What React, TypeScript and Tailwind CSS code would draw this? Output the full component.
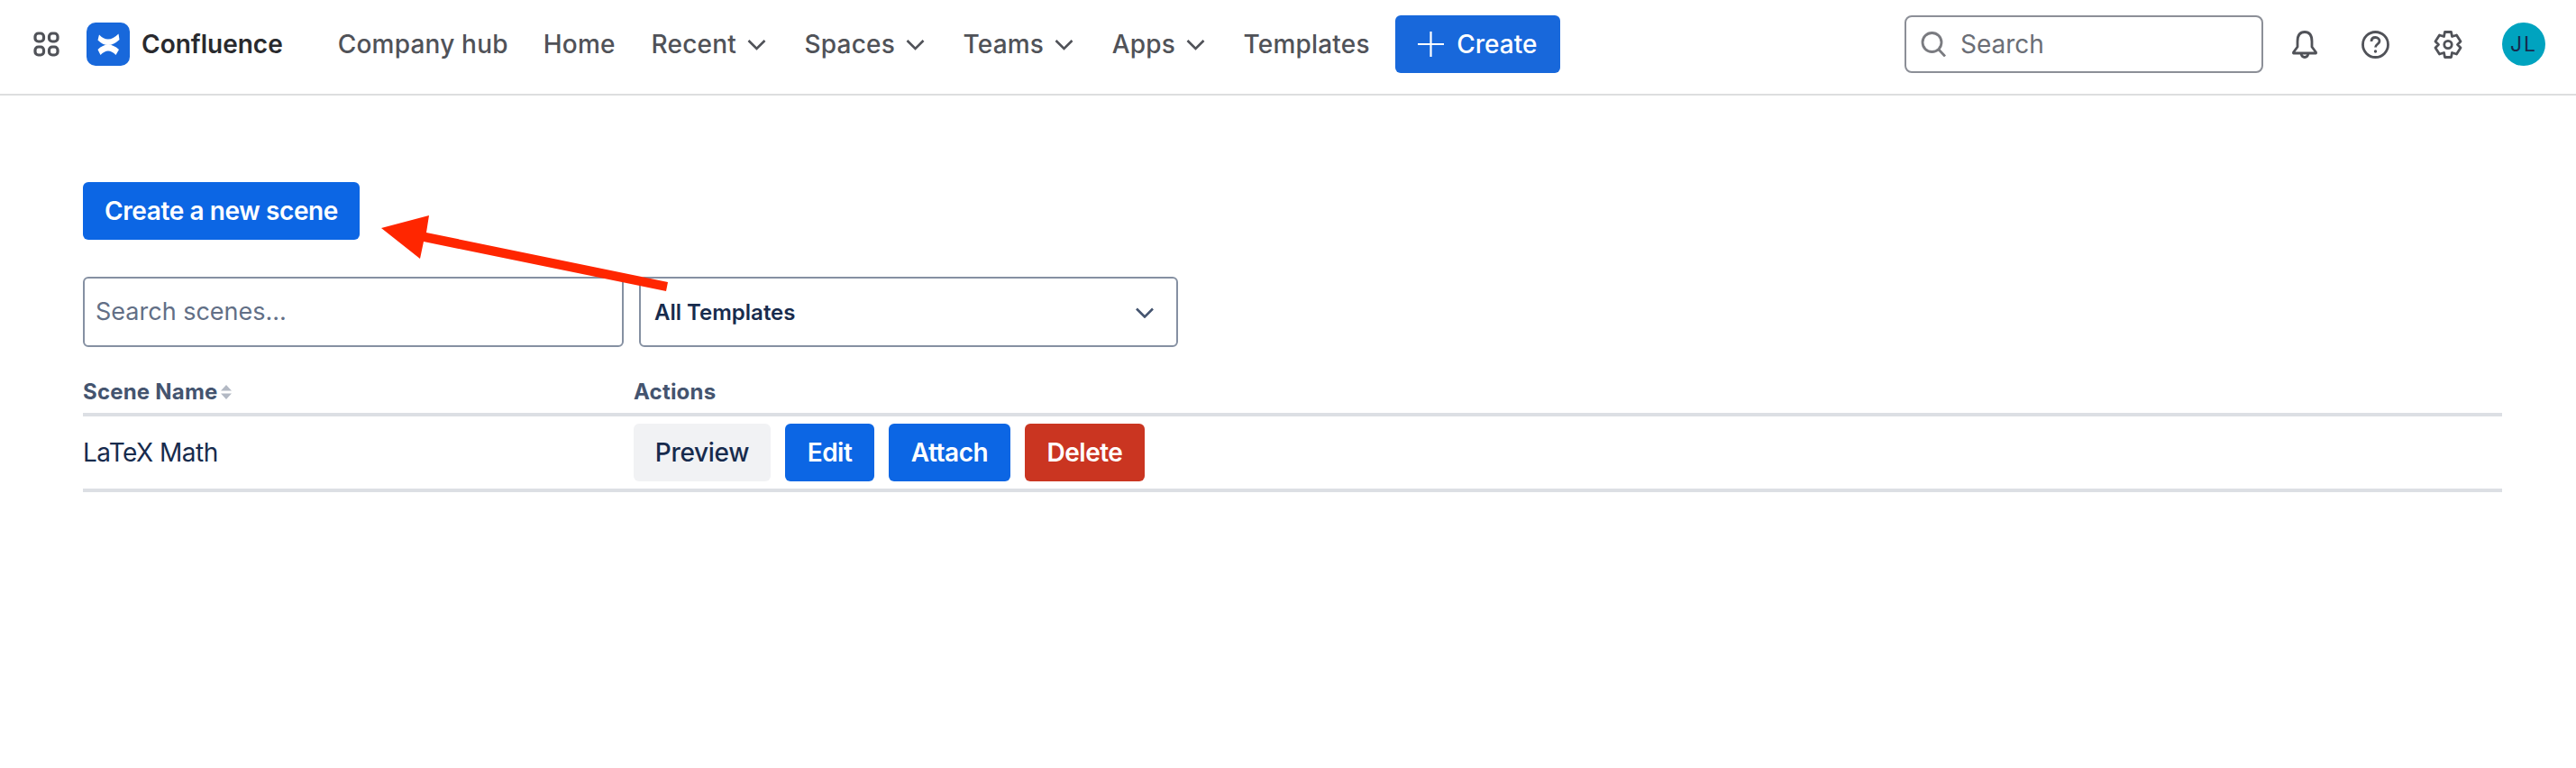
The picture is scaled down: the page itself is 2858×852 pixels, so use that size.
import React from "react";

const Chev = () => (
  <svg width="21" height="13" viewBox="0 0 21 13" fill="none" stroke="#505258" strokeWidth="2.6" className="mr-[2.5px] shrink-0">
    <path d="M1.5 2 L10.5 11 L19.5 2" />
  </svg>
);

const NavItem = ({ label, chevron }: { label: string; chevron?: boolean }) => (
  <div className="flex items-center gap-[12px]">
    <span className="text-[28px] leading-[32px] font-medium text-[#505258] tracking-[0.2px]">{label}</span>
    {chevron && <Chev />}
  </div>
);

const GridIcon = () => (
  <svg width="29" height="28" viewBox="0 0 29 28" fill="none" stroke="#505258" strokeWidth="3.2">
    <rect x="2" y="2" width="9.5" height="9" rx="3.5" />
    <rect x="17.5" y="2" width="9.5" height="9" rx="3.5" />
    <rect x="2" y="17" width="9.5" height="9" rx="3.5" />
    <rect x="17.5" y="17" width="9.5" height="9" rx="3.5" />
  </svg>
);

const Logo = () => (
  <svg width="48" height="48" viewBox="0 0 48 48">
    <rect width="48" height="48" rx="10" fill="#1868DB" />
    <path d="M14 13.5 Q24 24 35.5 12.5 L36.5 19 Q30 25 24 25 Q18 25 12.5 19.5 Z" fill="#fff" />
    <path d="M12.5 30 Q18 24.5 24 24.5 Q30 24.5 36 30 L32.5 36 Q24 27 15.5 36 Z" fill="#fff" />
  </svg>
);

const SearchIcon = () => (
  <svg width="28" height="28" viewBox="0 0 28 28" fill="none" stroke="#7a7b80" strokeWidth="2.8">
    <circle cx="12.5" cy="12" r="10.5" />
    <path d="M20 20 L27 27.5" />
  </svg>
);

const Bell = () => (
  <svg width="28" height="31" viewBox="0 0 28 31" fill="none" stroke="#505258" strokeWidth="2.8" strokeLinejoin="round">
    <path d="M6 12 C6 5 9 1.5 14 1.5 C19 1.5 22 5 22 12 V18 L26.5 24 V25 H1.5 V24 L6 18 Z" />
    <path d="M10 25 C10.5 28.5 12.5 29.5 14 29.5 C15.5 29.5 17.5 28.5 18 25" />
  </svg>
);

const Help = () => (
  <svg width="31" height="31" viewBox="0 0 31 31" fill="none" stroke="#505258" strokeWidth="2.8">
    <circle cx="15.5" cy="15.5" r="14" />
    <path d="M11 12 C11 9 13 7.5 15.5 7.5 C18 7.5 20 9.5 20 11.5 C20 15 15.5 15 15.5 18.5" />
    <circle cx="15.5" cy="23" r="1.7" fill="#505258" stroke="none" />
  </svg>
);

const Gear = () => (
  <svg width="32" height="31" viewBox="0 0 32 31" fill="none" stroke="#505258" strokeWidth="2.8" strokeLinejoin="round">
    <path d="M12.5 1.5 H19.5 L20.5 6.5 L25.5 5 L30 12 L26.5 15.5 L30 19 L25.5 26 L20.5 24.5 L19.5 29.5 H12.5 L11.5 24.5 L6.5 26 L2 19 L5.5 15.5 L2 12 L6.5 5 L11.5 6.5 Z" />
    <circle cx="16" cy="15.5" r="4.2" />
  </svg>
);

const Btn = ({ label, className }: { label: string; className: string }) => (
  <button className={`h-[64px] rounded-[6px] text-[28px] leading-[32px] ${className}`}>{label}</button>
);

export default function App() {
  return (
    <div className="relative h-[852px] w-[2858px] overflow-hidden bg-white font-['Inter',sans-serif]">
      <header className="flex h-[106px] items-center border-b-2 border-[#dddedf] bg-white pb-[6px]">
        <div className="ml-[37px]"><GridIcon /></div>
        <div className="ml-[30px]"><Logo /></div>
        <span className="ml-[13px] text-[28px] font-semibold leading-[32px] text-[#292a2e]">Confluence</span>
        <div className="ml-[61px] flex items-center gap-[40px]">
          <NavItem label="Company hub" />
          <div className="-ml-[1px]"><NavItem label="Home" /></div>
          <NavItem label="Recent" chevron />
          <NavItem label="Spaces" chevron />
          <NavItem label="Teams" chevron />
          <NavItem label="Apps" chevron />
          <NavItem label="Templates" />
        </div>
        <button className="ml-[28px] flex h-[64px] w-[183px] items-center justify-center gap-[14px] rounded-[6px] bg-[#1868db] text-[28px] font-medium text-white">
          <svg width="29" height="28" viewBox="0 0 29 28" stroke="#fff" strokeWidth="2.2"><path d="M14.5 0 V28 M0 14 H29" /></svg>
          Create
        </button>
        <div className="ml-auto flex h-[64px] w-[398px] items-center gap-[16px] rounded-[8px] border-2 border-[#8c8f97] pl-[16px]">
          <SearchIcon />
          <span className="text-[28px] leading-[32px] text-[#6b6e76]">Search</span>
        </div>
        <div className="ml-[32px]"><Bell /></div>
        <div className="ml-[49px]"><Help /></div>
        <div className="ml-[49px]"><Gear /></div>
        <div className="ml-[44px] mr-[34px] flex h-[48px] w-[48px] items-center justify-center rounded-full bg-[#00a3bf] text-[23px] tracking-[2px] text-[#172b4d]">JL</div>
      </header>

      <main className="pl-[92px] pr-[82px] pt-[96px]">
        <Btn label="Create a new scene" className="w-[307px] bg-[#0c66e4] font-semibold tracking-[-0.4px] text-white" />
        <div className="mt-[41px] flex gap-[17px]">
          <div className="flex h-[78px] w-[600px] items-center rounded-[6px] border-2 border-[#8590a2] pl-[12px] pt-[1px] text-[27px] text-[#626f86]">Search scenes...</div>
          <div className="flex h-[78px] w-[598px] items-center justify-between rounded-[6px] border-2 border-[#8590a2] pl-[15px] pr-[25px] pt-[2px] text-[24px] font-semibold text-[#172b4d]">
            All Templates
            <svg width="20" height="12" viewBox="0 0 20 12" fill="none" stroke="#44546f" strokeWidth="2.6"><path d="M1 1.5 L10 10.5 L19 1.5" /></svg>
          </div>
        </div>
        <div className="mt-[37px] flex h-[40px] items-center border-b-4 border-[#dcdfe4] pb-[10px] text-[24px] font-bold leading-[28px] tracking-[0.2px] text-[#44546f]">
          <div className="flex w-[611px] items-center gap-[4px]">
            Scene Name
            <svg width="12" height="16" viewBox="0 0 12 16" fill="#b3b9c4"><path d="M6 0 L12 6.5 H0 Z M0 9.5 H12 L6 16 Z" /></svg>
          </div>
          <div>Actions</div>
        </div>
        <div className="flex h-[84px] items-center border-b-4 border-[#dcdfe4]">
          <div className="w-[611px] text-[28px] leading-[32px] tracking-[-0.5px] text-[#172b4d]">LaTeX Math</div>
          <div className="flex gap-[16px]">
            <Btn label="Preview" className="w-[152px] bg-[#f1f2f4] font-medium tracking-[-0.3px] text-[#172b4d]" />
            <Btn label="Edit" className="w-[99px] bg-[#0c66e4] font-semibold tracking-[-0.5px] text-white" />
            <Btn label="Attach" className="w-[135px] bg-[#0c66e4] font-semibold tracking-[-0.5px] text-white" />
            <Btn label="Delete" className="w-[133px] bg-[#ca3521] font-semibold tracking-[-0.5px] text-white" />
          </div>
        </div>
      </main>

      <svg className="absolute left-0 top-0" width="2858" height="852" fill="#ff2600">
        <path d="M423 253 L476 239 L473 258 L741 313 L739 323 L470 268 L466 287 Z" />
      </svg>
    </div>
  );
}
